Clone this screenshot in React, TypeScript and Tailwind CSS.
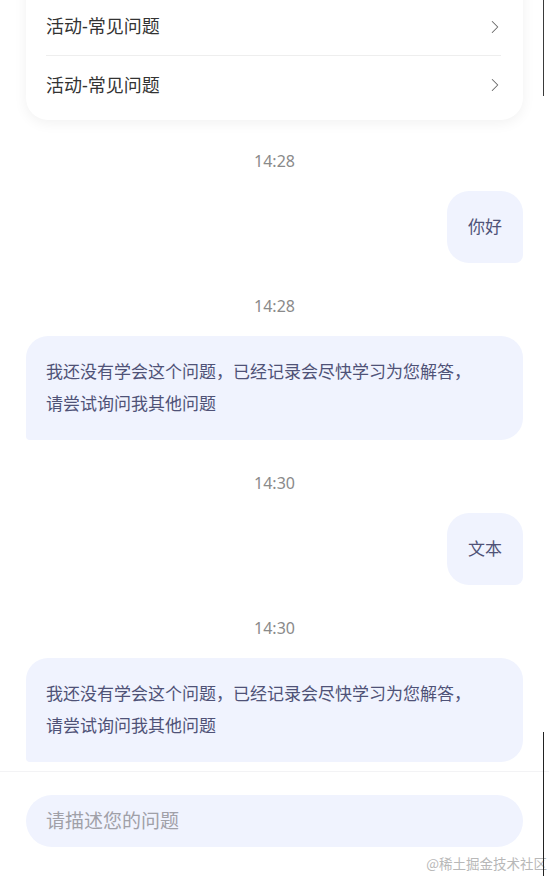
import { ChevronRight } from "lucide-react"

type Msg = { time: string; from: "me" | "bot"; lines: string[] }

const messages: Msg[] = [
    { time: "14:28", from: "me", lines: ["你好"] },
    { time: "14:28", from: "bot", lines: ["我还没有学会这个问题，已经记录会尽快学习为您解答，", "请尝试询问我其他问题"] },
    { time: "14:30", from: "me", lines: ["文本"] },
    { time: "14:30", from: "bot", lines: ["我还没有学会这个问题，已经记录会尽快学习为您解答，", "请尝试询问我其他问题"] },
]

const faqs = ["活动-常见问题", "活动-常见问题"]

export default function App() {
    return (
        <main
            className="relative w-[551px] h-[876px] overflow-hidden bg-white"
            style={{ fontFamily: '"Noto Sans", "Noto Sans CJK SC", sans-serif' }}
        >
            <div className="w-[549px] px-[26px]">

                <div className="-mt-[30px] pt-[28px] pb-[6px] pl-[20px] pr-[22px] bg-white rounded-[22px] shadow-[0_3px_14px_rgba(0,0,0,0.06)]">
                    {faqs.map((f, i) => (
                        <div
                            key={i}
                            className={`flex items-center h-[58px] ${i === 0 ? "border-b border-[#eeeeee]" : ""}`}
                        >
                            <span className="text-[18px] text-[#333333]">{f}</span>
                            <ChevronRight className="ml-auto -mr-[5px] w-[22px] h-[22px] text-[#666666]" strokeWidth={1.1} />
                        </div>
                    ))}
                </div>

                {messages.map((m, i) => (
                    <div key={i}>
                        <div className={`${i === 0 ? "mt-[31px]" : "mt-[33px]"} h-5 leading-5 text-center text-[16px] text-[#8a8a8a]`}>
                            {m.time}
                        </div>
                        {m.from === "me" ? (
                            <div className="mt-5 flex justify-end">
                                <div className="px-[21px] py-5 leading-[32px] text-[17px] text-[#4f5277] bg-[#f0f3fe] rounded-[22px] rounded-br-[8px]">
                                    {m.lines[0]}
                                </div>
                            </div>
                        ) : (
                            <div className="mt-5 px-5 py-5 leading-[32px] text-[17px] text-[#4f5277] bg-[#f0f3fe] rounded-[22px] rounded-bl-[4px]">
                                {m.lines.map((l, j) => (
                                    <div key={j}>{l}</div>
                                ))}
                            </div>
                        )}
                    </div>
                ))}
            </div>

            <div className="mt-[9px] w-[549px] border-t border-[#f3f3f5] px-[26px] pt-[23px]">
                <div className="h-[52px] flex items-center px-5 rounded-full bg-[#f0f3fe] text-[19px] text-[#a0a0a8]">
                    请描述您的问题
                </div>
            </div>

            <div className="absolute right-[4px] bottom-[3px] text-[13.5px] text-[#b8b8b8]" style={{ fontFamily: '"Noto Sans CJK SC", serif' }}>
                @稀土掘金技术社区
            </div>

            <div className="absolute left-[543px] top-0 w-px h-[96px] bg-[#3a3a3a]" />
            <div className="absolute left-[543px] top-[732px] w-px h-[144px] bg-[#222222]" />
        </main>
    )
}
